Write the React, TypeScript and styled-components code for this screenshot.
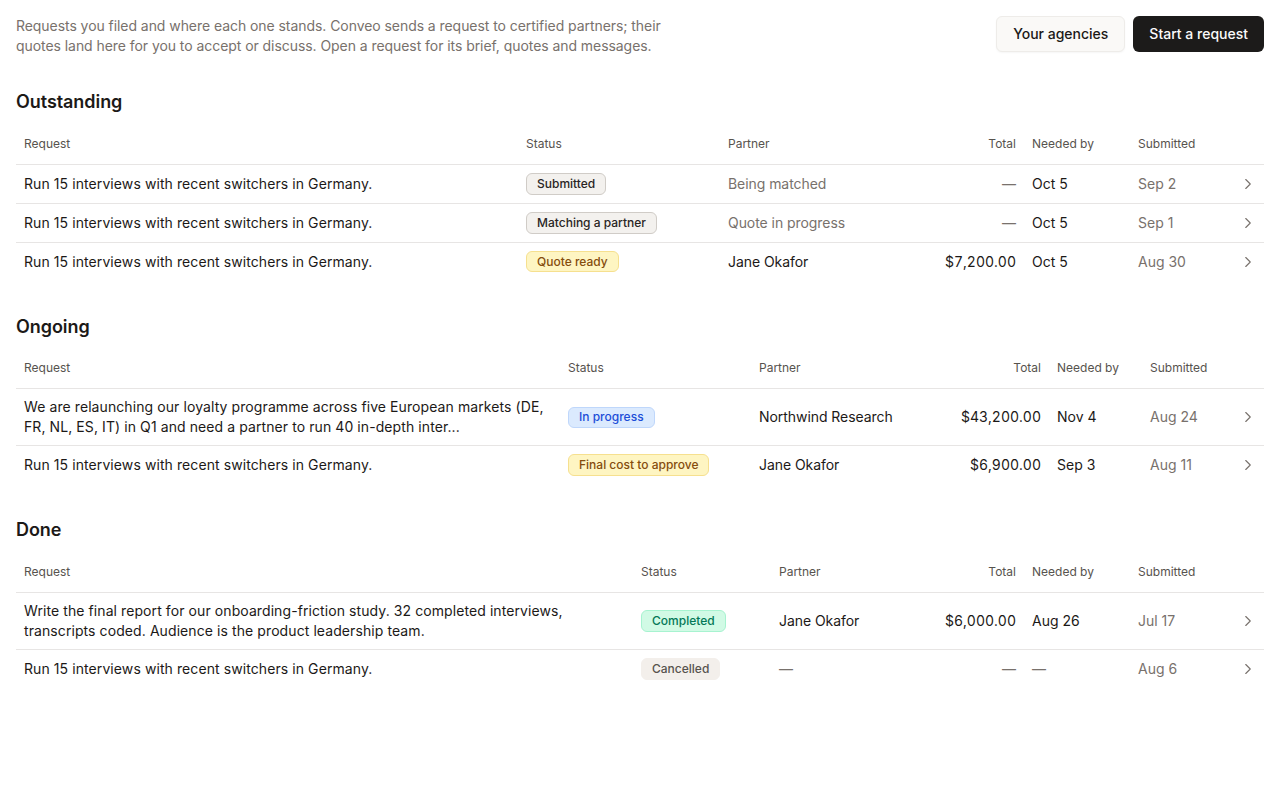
import React from "react";
import styled, { createGlobalStyle } from "styled-components";
import { ChevronRight } from "lucide-react";

const Global = createGlobalStyle`
  html, body { margin: 0; background: #fff; }
  body { font-family: Inter, "Liberation Sans", sans-serif; color: #1c1917; }
`;

const Page = styled.div`
  padding: 16px;
  display: flex;
  flex-direction: column;
`;
const Header = styled.header`
  display: flex;
  justify-content: space-between;
  align-items: flex-start;
  margin-bottom: 32.2px;
`;
const Intro = styled.p`
  margin: 0;
  width: 672px;
  font-size: 14px;
  line-height: 20px;
  letter-spacing: -0.06px;
  color: #78716c;
`;
const Actions = styled.div`
  display: flex;
  gap: 8px;
`;
const Button = styled.button<{ $primary?: boolean }>`
  height: 36px;
  padding: 0 16px;
  border-radius: 6px;
  font: 500 14px/20px Inter, sans-serif;
  border: ${(p) => (p.$primary ? "0" : "1px solid #eeece9")};
  background: ${(p) => (p.$primary ? "#1c1b1a" : "#faf9f7")};
  color: ${(p) => (p.$primary ? "#fafafa" : "#1c1917")};
  box-shadow: ${(p) => (p.$primary ? "none" : "0 1px 2px rgba(0,0,0,.04)")};
`;
const Section = styled.section`
  margin-bottom: 32.12px;
`;
const Title = styled.h2`
  margin: 0 0 7.88px;
  font-size: 18px;
  line-height: 28px;
  font-weight: 600;
  letter-spacing: -0.06px;
  color: #1c1917;
`;
const Table = styled.table`
  width: 100%;
  border-collapse: separate;
  border-spacing: 0;
  table-layout: fixed;
`;
const Th = styled.th<{ $right?: boolean }>`
  box-sizing: border-box;
  height: 41px;
  padding: 0 8px;
  font-size: 12px;
  line-height: 16px;
  font-weight: 400;
  color: #57534e;
  text-align: ${(p) => (p.$right ? "right" : "left")};
  border-bottom: 1px solid #e7e5e4;
`;
const Row = styled.tr`
  &:not(:last-child) td { border-bottom: 1px solid #e7e5e4; }
`;
const Td = styled.td<{ $right?: boolean; $muted?: boolean; $tabular?: boolean }>`
  padding: 8px;
  font-size: 14px;
  line-height: 20px;
  color: ${(p) => (p.$muted ? "#78716c" : "#1c1917")};
  text-align: ${(p) => (p.$right ? "right" : "left")};
  font-variant-numeric: ${(p) => (p.$tabular ? "tabular-nums" : "normal")};
`;
const RequestCell = styled(Td)`
  letter-spacing: 0.085px;
`;
const PartnerCell = styled(Td)`
  letter-spacing: -0.06px;
`;
const tones = {
  neutral: ["#f3f1ee", "#d0ccc7", "#292524"],
  quote: ["#fef5c2", "#f6e08f", "#854d0e"],
  info: ["#dbeafe", "#bfd7fb", "#1d4ed8"],
  success: ["#d1fae5", "#a7f3d0", "#047857"],
  cancelled: ["#f3efeb", "#f3efeb", "#57534e"],
};
type Tone = keyof typeof tones;
const Badge = styled.span<{ $tone: Tone }>`
  display: flex;
  align-items: center;
  width: fit-content;
  height: 21.8px;
  box-sizing: border-box;
  padding: 0 10px;
  border-radius: 6px;
  font-size: 12px;
  line-height: 16px;
  font-weight: 500;
  white-space: nowrap;
  background: ${(p) => tones[p.$tone][0]};
  border: 1px solid ${(p) => tones[p.$tone][1]};
  color: ${(p) => tones[p.$tone][2]};
`;
const SubCell = styled.div`
  display: flex;
  align-items: center;
  justify-content: space-between;
`;
const Chevron = styled(ChevronRight)`
  display: block;
  margin-right: -1px;
  color: #78716c;
`;

type R = { req: string; status: string; tone: Tone; partner: string; muted?: boolean; total: string; needed: string; sub: string };
const S = "Run 15 interviews with recent switchers in Germany.";
const DASH = "—";

const groups: { title: string; cols: number[]; rows: R[] }[] = [
  {
    title: "Outstanding",
    cols: [502, 202, 196, 108, 106, 134],
    rows: [
      { req: S, status: "Submitted", tone: "neutral", partner: "Being matched", muted: true, total: DASH, needed: "Oct 5", sub: "Sep 2" },
      { req: S, status: "Matching a partner", tone: "neutral", partner: "Quote in progress", muted: true, total: DASH, needed: "Oct 5", sub: "Sep 1" },
      { req: S, status: "Quote ready", tone: "quote", partner: "Jane Okafor", total: "$7,200.00", needed: "Oct 5", sub: "Aug 30" },
    ],
  },
  {
    title: "Ongoing",
    cols: [544, 191, 174, 124, 93, 122],
    rows: [
      { req: "We are relaunching our loyalty programme across five European markets (DE, FR, NL, ES, IT) in Q1 and need a partner to run 40 in-depth inter...", status: "In progress", tone: "info", partner: "Northwind Research", total: "$43,200.00", needed: "Nov 4", sub: "Aug 24" },
      { req: S, status: "Final cost to approve", tone: "quote", partner: "Jane Okafor", total: "$6,900.00", needed: "Sep 3", sub: "Aug 11" },
    ],
  },
  {
    title: "Done",
    cols: [617, 138, 158, 95, 106, 134],
    rows: [
      { req: "Write the final report for our onboarding-friction study. 32 completed interviews, transcripts coded. Audience is the product leadership team.", status: "Completed", tone: "success", partner: "Jane Okafor", total: "$6,000.00", needed: "Aug 26", sub: "Jul 17" },
      { req: S, status: "Cancelled", tone: "cancelled", partner: DASH, muted: true, total: DASH, needed: DASH, sub: "Aug 6" },
    ],
  },
];

export default function App() {
  return (
    <Page>
      <Global />
      <Header>
        <Intro>
          Requests you filed and where each one stands. Conveo sends a request to certified partners; their quotes land here for you to accept or discuss. Open a request for its brief, quotes and messages.
        </Intro>
        <Actions>
          <Button>Your agencies</Button>
          <Button $primary>Start a request</Button>
        </Actions>
      </Header>
      {groups.map((g) => (
        <Section key={g.title}>
          <Title>{g.title}</Title>
          <Table>
            <colgroup>
              {g.cols.map((c, i) => (
                <col key={i} style={{ width: c }} />
              ))}
            </colgroup>
            <thead>
              <tr>
                <Th>Request</Th>
                <Th>Status</Th>
                <Th>Partner</Th>
                <Th $right>Total</Th>
                <Th>Needed by</Th>
                <Th>Submitted</Th>
              </tr>
            </thead>
            <tbody>
              {g.rows.map((r, i) => (
                <Row key={i}>
                  <RequestCell>{r.req}</RequestCell>
                  <Td><Badge $tone={r.tone}>{r.status}</Badge></Td>
                  <PartnerCell $muted={r.muted}>{r.partner}</PartnerCell>
                  <Td $right $tabular $muted={r.total === DASH}>{r.total}</Td>
                  <Td $muted={r.needed === DASH}>{r.needed}</Td>
                  <Td $muted>
                    <SubCell>
                      {r.sub}
                      <Chevron size={18} strokeWidth={1.5} />
                    </SubCell>
                  </Td>
                </Row>
              ))}
            </tbody>
          </Table>
        </Section>
      ))}
    </Page>
  );
}
